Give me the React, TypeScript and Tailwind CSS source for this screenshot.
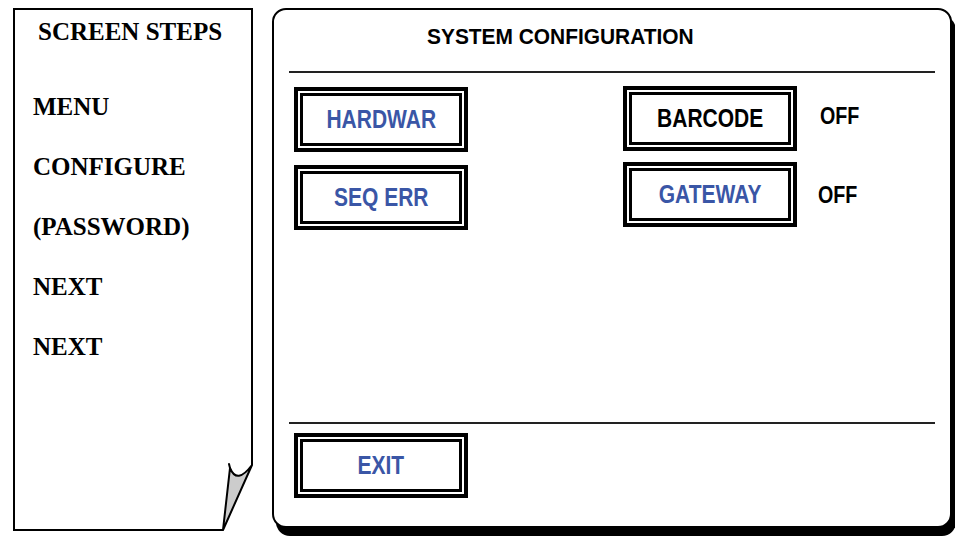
const serif = "font-['Liberation_Serif','Times_New_Roman',serif]";
const sans = "font-['Liberation_Sans',Arial,sans-serif]";

const steps = ["MENU", "CONFIGURE", "(PASSWORD)", "NEXT", "NEXT"];

function ConfigButton({ label, blue }: { label: string; blue?: boolean }) {
  return (
    <div className="w-[174px] h-[65px] border-[4px] border-black p-[2px] bg-white shrink-0">
      <div className="h-full border-[3px] border-black flex items-center justify-center">
        <span
          className={`inline-block scale-x-[0.84] text-[25px] leading-none font-bold ${sans} ${
            blue ? "text-[#3a56a6]" : "text-black"
          }`}
        >
          {label}
        </span>
      </div>
    </div>
  );
}

function Off({ className }: { className?: string }) {
  return (
    <span
      className={`inline-block origin-left scale-x-[0.82] text-[24px] leading-none font-bold text-black ${sans} ${className ?? ""}`}
    >
      OFF
    </span>
  );
}

export default function App() {
  return (
    <div className="w-[955px] h-[537px] bg-white overflow-hidden flex items-start pl-[13px] pt-[8px]">
      {/* Screen steps sheet */}
      <div className="relative w-[240px] h-[523px] border-2 border-black bg-white shrink-0">
        <div className={`pt-[9px] pl-[23px] text-[25px] leading-[25px] font-bold text-black ${serif}`}>
          SCREEN STEPS
        </div>
        <div className={`mt-[50px] pl-[18px] flex flex-col gap-[35px] text-[25px] leading-[25px] font-bold text-black ${serif}`}>
          {steps.map((s, i) => (
            <div key={i}>{s}</div>
          ))}
        </div>

        {/* page curl */}
        <svg
          className="absolute left-[200px] top-[445px]"
          width="42"
          height="80"
          viewBox="0 0 42 80"
        >
          <polygon points="37,10 42,10 42,80 8,80 8,75" fill="#fff" />
          <path
            d="M15 13 Q22 30 37 10 L8 75 Z"
            fill="#cccccc"
            stroke="#000"
            strokeWidth="2"
            strokeLinejoin="round"
          />
          <line x1="15" y1="13" x2="14" y2="9" stroke="#000" strokeWidth="2" strokeLinecap="round" />
        </svg>
      </div>

      {/* System configuration panel */}
      <div className="ml-[19px] w-[680px] h-[520px] border-2 border-black rounded-[14px] bg-white shadow-[4px_8px_0_#000] flex flex-col shrink-0">
        <div className="h-[61px] pt-[16px] pl-[153px]">
          <span className={`inline-block origin-left scale-x-[0.95] text-[22px] leading-[22px] font-bold text-black ${sans}`}>
            SYSTEM CONFIGURATION
          </span>
        </div>
        <div className="mx-[15px] h-[2px] bg-[#222]" />

        <div className="flex pl-[20px] pt-[14px]">
          <div className="flex flex-col gap-[13px]">
            <ConfigButton label="HARDWAR" blue />
            <ConfigButton label="SEQ ERR" blue />
          </div>
          <div className="ml-[155px] -mt-[1px] flex flex-col gap-[11px]">
            <div className="flex items-center">
              <ConfigButton label="BARCODE" />
              <Off className="ml-[23px] -mt-[6px]" />
            </div>
            <div className="flex items-center">
              <ConfigButton label="GATEWAY" blue />
              <Off className="ml-[21px]" />
            </div>
          </div>
        </div>

        <div className="mt-auto mx-[15px] h-[2px] bg-[#222]" />
        <div className="pl-[20px] pt-[9px] pb-[28px]">
          <ConfigButton label="EXIT" blue />
        </div>
      </div>
    </div>
  );
}
